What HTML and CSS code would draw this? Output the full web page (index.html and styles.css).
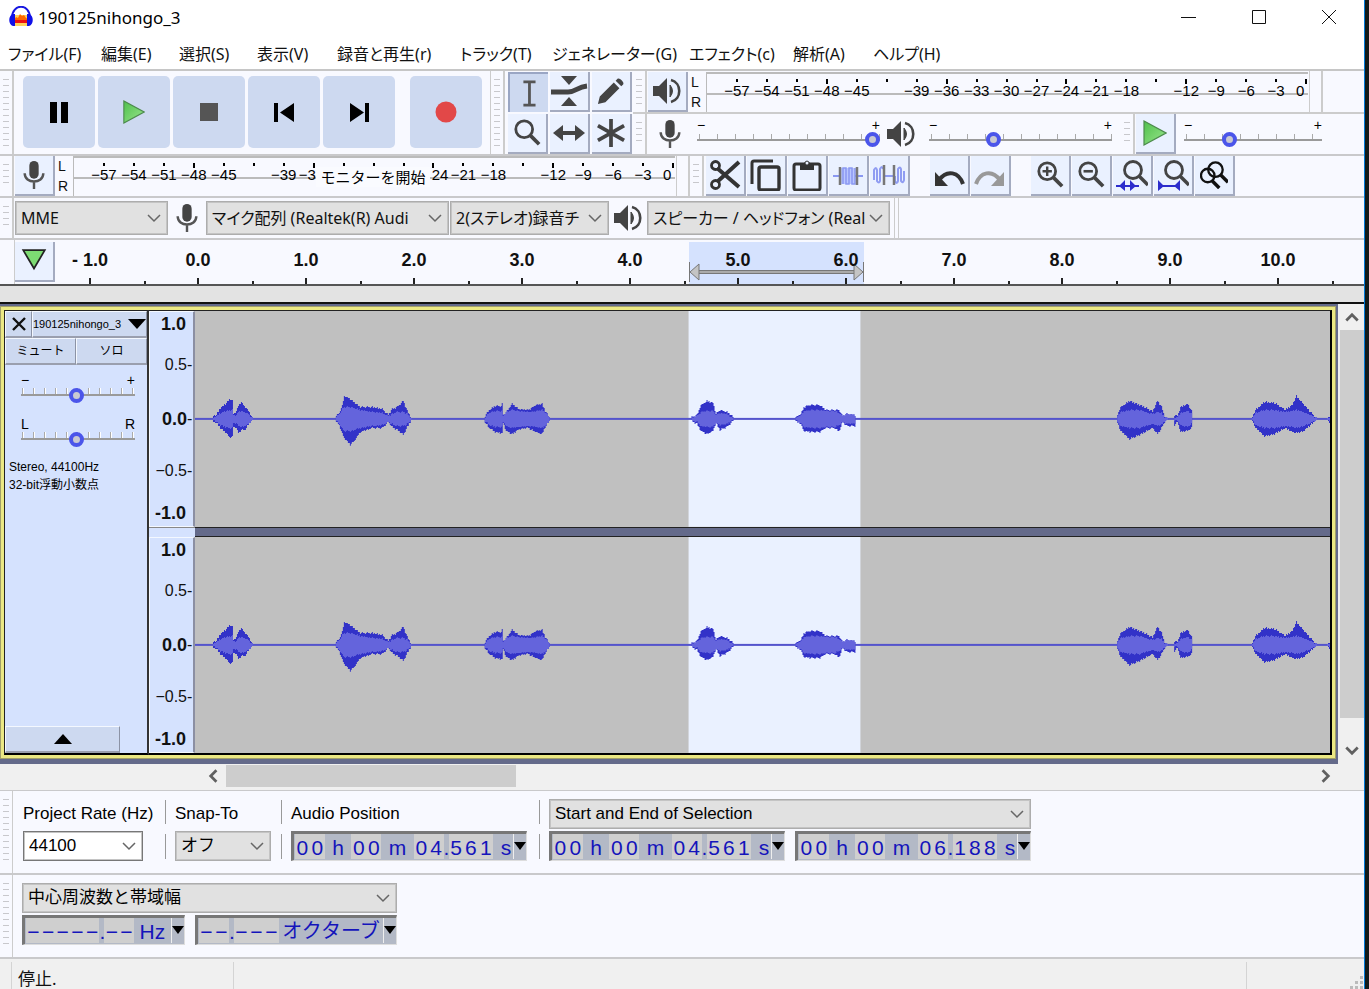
FILE: index.html
```html
<!DOCTYPE html>
<html lang="ja">
<head>
<meta charset="utf-8">
<title>190125nihongo_3</title>
<link rel="stylesheet" href="styles.css">
</head>
<body>
<svg class="defs" aria-hidden="true">
  <defs>
    <linearGradient id="green" x1="0" y1="0" x2="1" y2="1"><stop offset="0" stop-color="#4fc04c"/><stop offset="1" stop-color="#9be68e"/></linearGradient>
    <symbol id="chev" viewBox="0 0 14 14"><path d="M1 4l6 6 6-6" fill="none" stroke="#666" stroke-width="1.5"/></symbol>
    <symbol id="speaker" viewBox="0 0 28 28"><path d="M0 9h6l8-8v26l-8-8H0z" fill="#444"/><path d="M17 8q5 6 0 12z" fill="#444" stroke="#444"/><path d="M18 3c11 3 11 19 0 22" fill="none" stroke="#444" stroke-width="2.6"/></symbol>
    <symbol id="mic" viewBox="0 0 24 30"><rect x="7" y="0" width="10" height="19" rx="5" fill="#444"/><path d="M2 13c0 12 20 12 20 0M12 22v8" fill="none" stroke="#555" stroke-width="2.6"/></symbol>
    <symbol id="play" viewBox="0 0 24 26"><path d="M1 1v24l22-12z" fill="url(#green)" stroke="#4c8a4c" stroke-width="1.2"/></symbol>
    <symbol id="lens" viewBox="0 0 30 30"><circle cx="12" cy="11" r="9" fill="none" stroke="#444" stroke-width="3"/><path d="M18 17l10 10" stroke="#444" stroke-width="4"/></symbol>
  </defs>
</svg>
<div class="desktop">
<div class="window">
  <header class="titlebar">
    <svg class="logo" viewBox="0 0 24 22"><rect x="5" y="9" width="14" height="11" fill="#ffd35a"/><path d="M5 14l2-3 2 1 2-4 2 2 2-1 2 3 2 1v4H5z" fill="#f60"/><path d="M5 14h14v3H5z" fill="#e11"/><path d="M3 12C3-3 21-3 21 12" fill="none" stroke="#1717e0" stroke-width="2"/><path d="M4 8c-5 1-5 11 0 12h2V8zM20 8c5 1 5 11 0 12h-2V8z" fill="#1010e8"/></svg>
    <h1>190125nihongo_3</h1>
    <div class="winbtns">
      <button aria-label="最小化"><svg viewBox="0 0 16 16"><path d="M0 8.5h15"/></svg></button>
      <button aria-label="最大化"><svg viewBox="0 0 16 16"><path d="M1.500 1.500h13v13h-13z"/></svg></button>
      <button aria-label="閉じる"><svg viewBox="0 0 16 16"><path d="M1 1l14 14M15 1L1 15"/></svg></button>
    </div>
  </header>
  <nav class="menu">
    <button>ファイル(F)</button><button>編集(E)</button><button>選択(S)</button><button>表示(V)</button><button>録音と再生(r)</button><button>トラック(T)</button><button>ジェネレーター(G)</button><button>エフェクト(c)</button><button>解析(A)</button><button>ヘルプ(H)</button>
  </nav>

  <div class="row top">
    <section class="bar transport">
      <i class="grip"></i>
      <div class="big">
        <button aria-label="一時停止"><svg viewBox="0 0 24 24"><path d="M3 2h7v21H3zM14 2h7v21h-7z" fill="#000"/></svg></button>
        <button aria-label="再生"><svg viewBox="0 0 24 26"><use href="#play"/></svg></button>
        <button aria-label="停止"><svg viewBox="0 0 24 24"><path d="M3 3h18v18H3z" fill="#555"/></svg></button>
        <button aria-label="先頭へ"><svg viewBox="0 0 24 24"><path d="M2 3h4v19H2zM22 3v19L8 12.500z" fill="#000"/></svg></button>
        <button aria-label="末尾へ"><svg viewBox="0 0 24 24"><path d="M18 3h4v19h-4zM3 3v19l14-9.500z" fill="#000"/></svg></button>
        <button class="rec" aria-label="録音"><svg viewBox="0 0 24 24"><circle cx="12" cy="12" r="10.500" fill="#e24848"/></svg></button>
      </div>
    </section>
    <section class="bar">
      <i class="grip"></i>
      <div class="tools">
        <button class="tb on" aria-label="選択ツール"><svg viewBox="0 0 30 30"><path d="M9 3h13M9 28h13M15.500 3v25" fill="none" stroke="#555" stroke-width="3"/></svg></button>
        <button class="tb" aria-label="エンベロープツール"><svg class="wide" viewBox="0 0 38 32"><path d="M11 1h16l-8 9zM11 31h16l-8-9z" fill="#444"/><path d="M1 17h17c8 0 9-5 19-6" fill="none" stroke="#444" stroke-width="5"/></svg></button>
        <button class="tb" aria-label="描画ツール"><svg viewBox="0 0 30 30"><path d="M1 29l2-8L18 6l6 6L9 27zM20 4l2-2c2-2 8 4 6 6l-2 2z" fill="#444"/></svg></button>
        <button class="tb" aria-label="ズームツール"><svg viewBox="0 0 30 30"><use href="#lens"/></svg></button>
        <button class="tb" aria-label="タイムシフトツール"><svg class="wide" viewBox="0 0 38 32"><path d="M3 16l10-8v16zM35 16l-10-8v16z" fill="#444"/><path d="M10 16h18" stroke="#444" stroke-width="4"/></svg></button>
        <button class="tb" aria-label="マルチツール"><svg viewBox="0 0 30 30"><path d="M15 0v30M1 7l28 16M29 7L1 23" stroke="#444" stroke-width="4"/></svg></button>
      </div>
    </section>
    <div class="stack">
      <section class="bar">
        <i class="grip"></i>
        <button class="tb" aria-label="再生メーター"><svg viewBox="0 0 28 28"><use href="#speaker"/></svg></button>
        <div class="lr"><span>L</span><span>R</span></div>
        <ol class="meter">
          <li>−57</li><li>−54</li><li>−51</li><li>−48</li><li>−45</li><li></li><li>−39</li><li>−36</li><li>−33</li><li>−30</li><li>−27</li><li>−24</li><li>−21</li><li>−18</li><li></li><li>−12</li><li>−9</li><li>−6</li><li>−3</li><li>0</li>
        </ol>
        <i class="endcap"></i>
      </section>
      <section class="bar">
        <i class="grip"></i>
        <svg class="glyph first" viewBox="0 0 24 30"><use href="#mic"/></svg>
        <label class="slider"><span>−</span><span>+</span><input type="range" value="100" aria-label="録音音量"></label>
        <svg class="glyph" viewBox="0 0 28 28"><use href="#speaker"/></svg>
        <label class="slider"><span>−</span><span>+</span><input type="range" value="34" aria-label="再生音量"></label>
        <i class="grip"></i>
        <button class="tb" aria-label="指定速度で再生"><svg class="small" viewBox="0 0 24 26"><use href="#play"/></svg></button>
        <label class="slider short"><span>−</span><span>+</span><input type="range" value="31" aria-label="再生速度"></label>
      </section>
    </div>
  </div>

  <div class="row">
    <section class="bar">
      <i class="grip"></i>
      <button class="tb" aria-label="録音メーター"><svg viewBox="0 0 24 30"><use href="#mic"/></svg></button>
      <div class="lr"><span>L</span><span>R</span></div>
      <ol class="meter">
        <li>−57</li><li>−54</li><li>−51</li><li>−48</li><li>−45</li><li></li><li>−39</li><li class="start">−3</li><li></li><li></li><li></li><li class="end">24</li><li>−21</li><li>−18</li><li></li><li>−12</li><li>−9</li><li>−6</li><li>−3</li><li>0</li>
        <li class="tip">モニターを開始</li>
      </ol>
      <i class="endcap"></i>
    </section>
    <section class="bar">
      <i class="grip"></i>
      <div class="edit">
        <button class="tb" aria-label="切り取り"><svg viewBox="0 0 32 32"><path d="M8 9l22 19M8 23L30 3" stroke="#333" stroke-width="4"/><circle cx="6.500" cy="6.500" r="4" fill="none" stroke="#333" stroke-width="2.800"/><circle cx="6.500" cy="25.500" r="4" fill="none" stroke="#333" stroke-width="2.800"/></svg></button>
        <button class="tb" aria-label="コピー"><svg viewBox="0 0 32 32"><path d="M2 25V4q0-2 2-2h19" fill="none" stroke="#333" stroke-width="3"/><rect x="9" y="8" width="20" height="23" rx="2" fill="none" stroke="#333" stroke-width="3.400"/></svg></button>
        <button class="tb" aria-label="貼り付け"><svg viewBox="0 0 32 32"><rect x="3" y="5" width="26" height="26" rx="2" fill="none" stroke="#333" stroke-width="3"/><path d="M9 4h4q3-5 6 0h4v7H9z" fill="#333"/><circle cx="16" cy="4" r="1.500" fill="#eaf1ff"/></svg></button>
        <button class="tb" aria-label="トリム"><svg viewBox="0 0 32 32"><path d="M1 17h30" stroke="#8a98f2" stroke-width="2"/><path d="M9 9h14v16H9z" fill="#b9c6ff"/><path d="M11 25V9h3v16h3V9h3v16h3V9" fill="none" stroke="#8a98f2" stroke-width="1.500"/><path d="M8 8v18M25 8v18" stroke="#777" stroke-width="2.500"/></svg></button>
        <button class="tb" aria-label="無音化"><svg viewBox="0 0 32 32"><path d="M1 21V11q2-4 3 0v11q2 3 3 0V10q2-4 3 0M12 17h9M22 17v5q2 4 3 0V10q2-3 3 0v12q2 3 3-1V12" fill="none" stroke="#8f9cf2" stroke-width="2"/><path d="M11 6v20M21 6v20" stroke="#777" stroke-width="2.500"/></svg></button>
      </div>
      <div class="edit gapped">
        <button class="tb" aria-label="元に戻す"><svg viewBox="0 0 32 32"><path d="M2 13v14h13z" fill="#333"/><path d="M6 21C14 10 26 13 30 25" fill="none" stroke="#333" stroke-width="4"/></svg></button>
        <button class="tb" aria-label="やり直し"><svg viewBox="0 0 32 32"><path d="M30 13v14H17z" fill="#999"/><path d="M26 21C18 10 6 13 2 25" fill="none" stroke="#999" stroke-width="4"/></svg></button>
      </div>
      <div class="edit gapped">
        <button class="tb" aria-label="ズームイン"><svg class="fit" viewBox="0 0 30 30"><use href="#lens"/><path d="M12 6v10M7 11h10" stroke="#444" stroke-width="2.600"/></svg></button>
        <button class="tb" aria-label="ズームアウト"><svg class="fit" viewBox="0 0 30 30"><use href="#lens"/><path d="M7 11h10" stroke="#444" stroke-width="2.800"/></svg></button>
        <button class="tb" aria-label="選択範囲を合わせる"><svg viewBox="0 0 32 32"><circle cx="17" cy="11" r="8.500" fill="none" stroke="#444" stroke-width="2.800"/><path d="M23 17l9 9" stroke="#444" stroke-width="3.600"/><path d="M0 27h23" stroke="#2c2ccc" stroke-width="2"/><path d="M3 27l6-6v11zM20 27l-6-6v11z" fill="#2c2ccc"/></svg></button>
        <button class="tb" aria-label="全体を合わせる"><svg viewBox="0 0 32 32"><circle cx="17" cy="11" r="8.500" fill="none" stroke="#444" stroke-width="2.800"/><path d="M23 17l9 9" stroke="#444" stroke-width="3.600"/><path d="M1 27h22" stroke="#2c2ccc" stroke-width="2"/><path d="M1 21l6 6-6 5zM23 21l-6 6 6 5z" fill="#2c2ccc"/></svg></button>
        <button class="tb" aria-label="ズーム切り替え"><svg class="fit" viewBox="2 1 29 29"><g fill="none" stroke="#111"><circle cx="10" cy="16" r="7" stroke-width="2.400"/><circle cx="18" cy="10" r="7.500" stroke-width="2.400"/><path d="M14 21l8 8M23 15l8 8" stroke-width="3.600"/></g></svg></button>
      </div>
    </section>
  </div>

  <div class="row device">
    <i class="grip"></i>
    <div class="combo host"><select aria-label="オーディオホスト"><option>MME</option></select><svg><use href="#chev"/></svg></div>
    <svg class="glyph" viewBox="0 0 24 30"><use href="#mic"/></svg>
    <div class="combo mid"><select aria-label="録音デバイス"><option>マイク配列 (Realtek(R) Audi</option></select><svg><use href="#chev"/></svg></div>
    <div class="combo chan"><select aria-label="録音チャンネル"><option>2(ステレオ)録音チ</option></select><svg><use href="#chev"/></svg></div>
    <svg class="glyph" viewBox="0 0 28 28"><use href="#speaker"/></svg>
    <div class="combo mid"><select aria-label="再生デバイス"><option>スピーカー / ヘッドフォン (Real</option></select><svg><use href="#chev"/></svg></div>
    <i class="rules"></i>
  </div>

  <div class="timeline">
    <i class="blank"></i>
    <button class="tb" aria-label="再生ヘッドを固定"><svg viewBox="0 0 26 24"><path d="M3 2h20L13 19z" fill="#7ddb73" stroke="#222" stroke-width="1.600"/></svg></button>
    <div class="scale">
      <div class="range"><svg viewBox="0 0 175 24" preserveAspectRatio="none"><path d="M8 12h159" stroke="#777" stroke-width="4"/><path d="M8 12h159" stroke="#aaa" stroke-width="2"/><path d="M1 12l9-8v16zM174 12l-9-8v16z" fill="#c4c4c4" stroke="#777"/><path d="M.5 2v20M174.500 2v20" stroke="#777"/></svg></div>
      <ol><li>- 1.0</li><li>0.0</li><li>1.0</li><li>2.0</li><li>3.0</li><li>4.0</li><li>5.0</li><li>6.0</li><li>7.0</li><li>8.0</li><li>9.0</li><li>10.0</li><li></li></ol>
    </div>
  </div>
  <div class="scrub"></div>

  <main class="project">
    <div class="tracks">
      <article class="track">
        <div class="panel">
          <div class="head"><button class="pb" aria-label="閉じる"><svg viewBox="0 0 14 14"><path d="M1 1l12 12M13 1L1 13" stroke="#111" stroke-width="2.400"/></svg></button><button class="pb name">190125nihongo_3<svg viewBox="0 0 18 10"><path d="M0 0h18l-9 10z"/></svg></button></div>
          <div class="head halves"><button class="pb">ミュート</button><button class="pb">ソロ</button></div>
          <label class="slider mini"><span>−</span><span>+</span><input type="range" value="48" aria-label="ゲイン"></label>
          <label class="slider mini"><span>L</span><span>R</span><input type="range" value="48" aria-label="パン"></label>
          <p>Stereo, 44100Hz<br>32-bit浮動小数点</p>
          <button class="pb fold" aria-label="折りたたむ"><svg viewBox="0 0 18 10"><path d="M0 10h18L9 0z"/></svg></button>
        </div>
        <div class="channels">
          <ol class="vruler"><li><b>1.0</b></li><li>0.5<i>-</i></li><li><b>0.0</b><i>-</i></li><li>−0.5<i>-</i></li><li><b>-1.0</b></li></ol>
          <svg class="wave" viewBox="0 0 1136 216" preserveAspectRatio="none"></svg>
          <i class="seam light"></i><i class="seam"></i>
          <ol class="vruler"><li><b>1.0</b></li><li>0.5<i>-</i></li><li><b>0.0</b><i>-</i></li><li>−0.5<i>-</i></li><li><b>-1.0</b></li></ol>
          <svg class="wave" viewBox="0 0 1136 216" preserveAspectRatio="none"></svg>
        </div>
      </article>
    </div>
    <div class="vscroll">
      <button aria-label="上へ"><svg viewBox="0 0 14 14"><path d="M2 10l5-5 5 5"/></svg></button>
      <i></i>
      <button aria-label="下へ"><svg viewBox="0 0 14 14"><path d="M2 4l5 5 5-5"/></svg></button>
    </div>
  </main>
  <div class="hscroll">
    <button aria-label="左へ"><svg viewBox="0 0 14 14"><path d="M10 2L5 7l5 5"/></svg></button>
    <i></i>
    <button aria-label="右へ"><svg viewBox="0 0 14 14"><path d="M4 2l5 5-5 5"/></svg></button>
  </div>

  <section class="row bottom">
    <i class="grip"></i>
    <div class="field rate"><label for="rate">Project Rate (Hz)</label><div class="combo white"><select id="rate"><option>44100</option></select><svg><use href="#chev"/></svg></div></div>
    <i class="sep"></i>
    <div class="field snap"><label for="snap">Snap-To</label><div class="combo"><select id="snap"><option>オフ</option></select><svg><use href="#chev"/></svg></div></div>
    <i class="sep"></i>
    <div class="field pos"><span class="cap">Audio Position</span>
      <div class="time"><b>0</b><b>0</b><span class="h">h</span><b>0</b><b>0</b><span class="m">m</span><b>0</b><b>4</b><span class="dot">.</span><b>5</b><b>6</b><b>1</b><span class="s">s</span><button aria-label="形式"><svg viewBox="0 0 12 8"><path d="M0 0h12L6 8z"/></svg></button></div></div>
    <i class="sep"></i>
    <div class="field">
      <div class="combo sel"><select aria-label="選択モード"><option>Start and End of Selection</option></select><svg><use href="#chev"/></svg></div>
      <div class="pair">
      <div class="time"><b>0</b><b>0</b><span class="h">h</span><b>0</b><b>0</b><span class="m">m</span><b>0</b><b>4</b><span class="dot">.</span><b>5</b><b>6</b><b>1</b><span class="s">s</span><button aria-label="形式"><svg viewBox="0 0 12 8"><path d="M0 0h12L6 8z"/></svg></button></div>
      <div class="time"><b>0</b><b>0</b><span class="h">h</span><b>0</b><b>0</b><span class="m">m</span><b>0</b><b>6</b><span class="dot">.</span><b>1</b><b>8</b><b>8</b><span class="s">s</span><button aria-label="形式"><svg viewBox="0 0 12 8"><path d="M0 0h12L6 8z"/></svg></button></div>
      </div>
    </div>
  </section>
  <section class="row bottom">
    <i class="grip"></i>
    <div class="field spectral">
      <div class="combo"><select aria-label="周波数選択"><option>中心周波数と帯域幅</option></select><svg><use href="#chev"/></svg></div>
      <div class="pair">
      <div class="time"><b>−</b><b>−</b><b>−</b><b>−</b><b>−</b><span class="dot">.</span><b>−</b><b>−</b><span class="hz">Hz</span><button aria-label="形式"><svg viewBox="0 0 12 8"><path d="M0 0h12L6 8z"/></svg></button></div>
      <div class="time"><b>−</b><b>−</b><span class="dot">.</span><b>−</b><b>−</b><b>−</b><span class="oct">オクターブ</span><button aria-label="形式"><svg viewBox="0 0 12 8"><path d="M0 0h12L6 8z"/></svg></button></div>
      </div>
    </div>
  </section>
  <footer class="status"><span>停止.</span><span></span><span><svg viewBox="0 0 14 14"><path d="M10 0h3v3h-3zM5 5h3v3H5zM10 5h3v3h-3zM0 10h3v3H0zM5 10h3v3H5zM10 10h3v3h-3z" fill="#bbb"/></svg></span></footer>
</div>
</div>
<script src="wave.js"></script>
</body>
</html>
```
FILE: styles.css
```css
* { box-sizing: border-box; }
body { margin: 0; font-family: "Noto Sans", "Noto Sans CJK JP", sans-serif; font-size: 16px; color: #111; font-feature-settings: "palt"; }
button { border: 0; padding: 0; margin: 0; background: none; font: inherit; color: inherit; }
ol { list-style: none; margin: 0; padding: 0; }
i { font-style: normal; }
.defs { position: absolute; width: 0; height: 0; }
.desktop { min-height: 100vh; background: #121a1a; padding-right: 4px; display: flex; }
.window { flex: 1; min-width: 0; background: #f8f9ff; border-right: 1px solid #0078d7; display: flex; flex-direction: column; }

.titlebar { display: flex; align-items: center; height: 34px; background: #fff; padding-left: 9px; gap: 5px; }
.logo { width: 24px; height: 22px; }
h1 { font-size: 17px; font-weight: 400; margin: 0; flex: 1; color: #000; }
.winbtns { display: flex; }
.winbtns button { width: 70px; height: 32px; display: grid; place-items: center; }
.winbtns svg { width: 16px; height: 16px; fill: none; stroke: #111; stroke-width: 1; }
.menu { display: grid; grid-template-columns: 93px 78px 78px 80px 123px 92px 137px 104px 80px auto; background: #fff; height: 37px; padding-left: 8px; align-items: center; border-bottom: 2px solid #c6c6c6; }
.menu button { text-align: left; white-space: nowrap; line-height: 24px; padding-top: 4px; }

.row { display: flex; border-bottom: 2px solid #c9c9cb; }
.bar { display: flex; align-items: center; }
.grip { width: 14px; flex: none; align-self: stretch; border-right: 2px solid #ccc; background: repeating-linear-gradient(#c8c8cc 0 1px, transparent 1px 6px) content-box; padding: 8px 3px; }
.transport { border-right: 1px solid #ccc; }
.big { display: flex; gap: 3px; padding: 5px 8px 6px 9px; }
.big button { width: 72px; height: 72px; border-radius: 5px; background: #cdd9f0; display: grid; place-items: center; }
.big svg { width: 24px; height: 24px; }
.big .rec { margin-left: 12px; }
.tools { display: grid; grid-template-columns: repeat(3, 40px); gap: 2px; padding: 0 1px 0 3px; }
.tb { width: 40px; height: 40px; flex: none; background: #eaf1ff; border-right: 2px solid #a4abc0; border-bottom: 2px solid #a4abc0; display: grid; place-items: center; }
.tb.on { background: #cdd9f0; border: 0; border-left: 2px solid #9aa6c4; border-top: 2px solid #9aa6c4; }
.tb svg { width: 28px; height: 28px; }
.tb .wide { width: 38px; height: 32px; }
.tb .small { width: 24px; height: 26px; }
.stack { flex: 1; }
.stack .bar { height: 41px; }
.stack .bar + .bar { border-top: 2px solid #ccc; height: 42px; }
.stack .bar .tb { margin-left: 4px; }
.lr { display: flex; flex-direction: column; justify-content: space-between; width: 18px; padding-left: 3px; font: 14px/20px "Liberation Sans", sans-serif; }
.meter { position: relative; display: flex; width: 615px; height: 40px; padding-left: 15px; border-left: 1px solid #bbb; background: linear-gradient(#bbb, #bbb) 0 0 / 601px 2px no-repeat, linear-gradient(#bbb, #bbb) 0 21px / 601px 2px no-repeat; }
.meter li { flex: 1; text-align: center; font: 15px/20px "Liberation Sans", sans-serif; color: #000; background: linear-gradient(#000, #000) 50% 7px / 2px 3px no-repeat; padding-top: 9px; white-space: nowrap; }
.meter li:nth-child(4n) { background-size: 2px 5px; }
.meter li:nth-child(20) { text-indent: -12px; }
.meter .start { text-align: left; }
.meter .end { text-align: right; }
.meter .tip { position: absolute; left: 242px; top: 11px; width: 114px; height: 20px; padding: 0; background: #fafbff; font: 15px/20px "Noto Sans CJK JP", sans-serif; }
.endcap { width: 14px; align-self: stretch; border-right: 2px solid #ccc; margin-left: -12px; }
.endcap::before { content: ""; display: block; width: 1px; height: 100%; background: #ccc; }
.rules { width: 9px; align-self: stretch; border-right: 1px solid #ccc; background: linear-gradient(#ccc, #ccc) 4px 0 / 1px 100% no-repeat; }

.glyph { width: 28px; height: 28px; flex: none; margin: 0 5px; }
.glyph.first { margin-left: 9px; }
.slider { display: grid; grid-template-columns: 1fr 1fr; width: 183px; margin-left: 6px; font: 14px/14px "Liberation Sans", sans-serif; color: #000; }
.slider + .glyph { margin-left: 7px; }
.glyph + .slider { margin-left: 9px; }
.glyph.first + .slider { margin-left: 8px; }
.slider span + span { text-align: right; }
.slider input { grid-column: 1 / 3; appearance: none; margin: 0; width: 100%; height: 16px; background: linear-gradient(#9a9a9a, #9a9a9a) 0 7px / 100% 2px no-repeat, repeating-linear-gradient(90deg, #aaa 0 1px, transparent 1px 18px) 2px 2px / 100% 5px no-repeat; }
.slider input::-webkit-slider-thumb { appearance: none; width: 15px; height: 15px; border-radius: 50%; border: 4px solid #4b55ea; background: #c9c9d2; }
.slider.short { width: 138px; margin-left: 8px; }
.slider + .grip { margin-left: 9px; }
.stack .bar + .bar > .slider { margin-bottom: 3px; }

.edit { display: flex; gap: 1px; padding-left: 2px; }
.edit .tb svg { width: 32px; height: 32px; }
.edit .tb .fit { width: 28px; height: 28px; }
.edit.gapped { margin-left: 18px; }
.row .bar > .tb { margin-left: 1px; }

.device { height: 42px; align-items: center; }
.combo { display: grid; grid-template-columns: minmax(0, 1fr) 14px 6px; align-items: center; background: #e1e1e1; border: 1px solid #adadad; outline: 1px solid #c4c4c4; outline-offset: -2px; height: 34px; }
.combo select { grid-area: 1 / 1 / 2 / 4; appearance: none; border: 0; background: none; font: inherit; color: inherit; width: 100%; height: 100%; padding: 0 20px 0 5px; font-feature-settings: inherit; }
.combo svg { grid-area: 1 / 2; width: 14px; height: 14px; pointer-events: none; }
.combo.white { background: #fff; border-color: #777; }
.host { width: 153px; margin-left: 1px; }
.mid { width: 243px; }
.chan { width: 159px; margin-left: 1px; }
.device .glyph { margin: 0 5px; }

.timeline { display: flex; height: 44px; align-items: center; }
.blank { width: 15px; align-self: stretch; border-right: 1px solid #ccc; }
.scale { position: relative; flex: 1; height: 44px; overflow: hidden; }
.scale ol { display: flex; position: relative; margin-left: -19px; }
.scale li { flex: 0 0 108px; height: 44px; text-align: center; font: bold 18px/40px "Liberation Sans", sans-serif; background: linear-gradient(#222, #222) 50% 100% / 2px 6px no-repeat, linear-gradient(#222, #222) 0 100% / 2px 3px no-repeat; }
.scale li:last-child { background-size: 0 0, 2px 3px; }
.range { position: absolute; left: 634px; width: 175px; top: 2px; bottom: 0; background: #d5e2fe; display: flex; align-items: flex-end; }
.range svg { width: 100%; height: 24px; }
.scrub { height: 20px; background: #e3e3e3; border-top: 2px solid #555; border-bottom: 2px solid #111; }

.project { display: flex; flex: 1; min-height: 440px; }
.tracks { flex: 1; background: #646a8a; padding: 2px 2px 5px 0; display: flex; }
.track { flex: 1; display: flex; border: 4px solid #ebe883; outline: 1px solid #a19f6a; outline-offset: -1px; min-width: 0; }
.track > * { border-top: 1px solid #222; border-bottom: 2px solid #000; }
.panel { width: 145px; background: #d5e2fe; border-left: 1px solid #222; border-right: 2px solid #333; display: flex; flex-direction: column; font: 12px/18px "Liberation Sans", "Noto Sans CJK JP", sans-serif; color: #000; }
.head { display: flex; }
.pb { background: #cdd9f0; border: 1px solid #f4f8ff; border-right-color: #8c93a5; border-bottom: 2px solid #9a9fae; height: 27px; flex: 1; display: flex; align-items: center; justify-content: center; }
.head .pb:first-child { flex: 0 0 27px; }
.head.halves .pb:first-child { flex: 1; }
.name { font-size: 11px; gap: 7px; }
.name svg, .fold svg { width: 18px; height: 10px; }
.head .pb svg { flex: none; }
.head .pb:first-child svg { width: 14px; }
.panel .fold { flex: none; width: 115px; margin-top: auto; }
.slider.mini { width: 114px; margin: 8px 0 0 16px; }
.slider.mini + .slider.mini { margin-top: 14px; }
.mini input { background: linear-gradient(#9a9a9a, #9a9a9a) 0 7px / 100% 2px no-repeat, repeating-linear-gradient(90deg, #aaa 0 1px, #fff 1px 2px, transparent 2px 11px) 1px 1px / 100% 6px no-repeat; }
.panel p { margin: 11px 0 0 4px; }
.channels { flex: 1; display: grid; grid-template-columns: 46px minmax(0, 1fr); grid-template-rows: 1fr 10px 1fr; border-right: 2px solid #000; }
.vruler { display: grid; grid-template-rows: 24fr 60fr 48fr 58fr 26fr; align-items: center; background: #d5e2fe; border: 1px solid #f4f8ff; border-right: 2px solid #8b8fa3; font: 16px/20px "Liberation Sans", sans-serif; }
.vruler li { display: flex; justify-content: flex-end; padding-right: 7px; white-space: nowrap; }
.vruler b { font-size: 18px; }
.vruler i { width: 6px; margin-right: -7px; }
.wave { width: 100%; height: 100%; background: #c0c0c0; }
.seam { background: #646a8a; border-top: 1px solid #222; border-bottom: 1px solid #222; }
.seam.light { background: #d5e2fe; border-color: #888 #8b8fa3 #d5e2fe; }

.vscroll { width: 26px; background: #f0f0f0; display: flex; flex-direction: column; padding-left: 2px; }
.vscroll button { height: 26px; display: grid; place-items: center; }
.vscroll i { flex: 1; background: #cdcdcd; margin-bottom: 20px; }
.vscroll svg, .hscroll svg { width: 16px; height: 16px; fill: none; stroke: #606060; stroke-width: 2.4; }
.hscroll { display: flex; height: 27px; background: #f0f0f0; padding: 1px 25px 3px 200px; border-bottom: 1px solid #c9c9cb; }
.hscroll button { width: 26px; display: grid; place-items: center; }
.hscroll i { width: 290px; background: #cdcdcd; margin-right: auto; }

.bottom { height: 84px; font: 17px/28px "Liberation Sans", "Noto Sans CJK JP", sans-serif; color: #000; }
.bottom .grip { width: 13px; border-right-width: 1px; }
.bottom .field { display: flex; flex-direction: column; gap: 2px; padding-top: 8px; }
.bottom .combo { height: 30px; }
.field > label, .cap { height: 30px; line-height: 30px; white-space: nowrap; }
.rate { width: 133px; margin-left: 10px; }
.rate .combo { width: 120px; }
.snap { width: 96px; }
.snap .combo { width: 96px; }
.sep { width: 1px; margin: 9px 9px 14px; background: linear-gradient(#999 0 24px, transparent 24px 34px, #999 34px); }
.snap + .sep { margin-left: 10px; }
.pos { width: 237px; }
.pos + .sep { margin-left: 11px; }
.pair { display: flex; gap: 10px; }
.time { display: flex; width: 236px; height: 30px; background: #b3b9c6; border: 1px solid #ddd; border-top: 3px solid #777; border-left: 3px solid #777; font: 21px/27px "Liberation Sans", "Noto Sans CJK JP", sans-serif; color: #1414bb; padding: 0 0 1px 1px; }
.time b { width: 15px; background: #cfcfcf; font-weight: 400; text-align: center; }
.time span { text-align: center; }
.time .h { width: 27px; }
.time .m { width: 33px; }
.time .dot { width: 5px; }
.time .s { width: 20px; padding-left: 6px; }
.time .hz { width: 38px; }
.time .oct { flex: 1; font-size: 20px; white-space: nowrap; }
.time button { width: 13px; margin-left: auto; border-left: 1px solid #eee; display: grid; place-items: center; }
.time svg { width: 12px; height: 8px; }
.spectral { width: 375px; margin-left: 9px; }
.spectral .time { width: 163px; }
.spectral .time + .time { width: 202px; }

.status { display: flex; height: 31px; background: #f0f0f0; font-size: 17px; line-height: 34px; padding-left: 11px; }
.status span { border-left: 1px solid #d4d4d4; margin-top: 3px; height: 28px; width: 222px; padding-left: 6px; }
.status span + span { flex: 1; }
.status span:last-child { flex: 0 0 118px; display: flex; justify-content: flex-end; align-items: flex-end; }
.status svg { width: 14px; height: 14px; }
```
FILE: wave.js
```js
// Each burst is a list of [x, peak above, peak below, rms] key points.
const bursts = [
  [[18,3,3,1],[21,4,4,3],[25,11,9,6],[30,15,13,8],[34,20,18,9],[37,18,18,9],[38,5,8,4],[41,8,9,4],[43,13,14,7],[46,17,11,8],[49,13,11,7],[53,8,6,5],[57,1,1,1]],
  [[141,3,3,2],[144,6,6,5],[147,13,15,10],[149,23,19,12],[155,20,26,12],[159,17,22,11],[165,12,13,9],[177,12,9,7],[187,10,9,6],[193,4,3,3],[197,10,8,5],[202,12,11,7],[208,18,16,7],[212,8,8,5],[216,1,1,1]],
  [[290,3,3,2],[294,9,9,6],[300,13,13,8],[306,13,14,8],[307,15,15,8],[308,4,4,3],[311,7,12,7],[317,15,15,9],[324,10,10,8],[333,9,9,7],[341,14,13,8],[347,15,15,9],[350,8,8,7],[354,2,2,2]],
  [[497,2,2,1],[502,4,5,3],[506,14,12,7],[512,18,15,8],[518,16,12,8],[521,5,4,4],[525,9,11,6],[532,7,8,5],[538,2,2,1]],
  [[601,2,2,1],[606,5,5,4],[609,12,12,8],[617,14,13,9],[625,14,13,9],[631,9,9,8],[640,9,9,8],[644,9,12,6],[648,3,3,3],[652,5,7,5],[660,4,7,4]],
  [[923,4,4,3],[926,12,12,7],[935,18,20,9],[945,14,16,9],[954,10,11,6],[958,7,9,5],[963,18,15,7],[967,12,9,6],[970,3,3,2],[973,1,1,1]],
  [[980,4,6,1],[983,3,3,2],[986,12,13,6],[993,15,12,8],[997,8,9,5]],
  [[1058,2,2,1],[1061,9,9,6],[1070,17,17,9],[1080,16,15,9],[1091,9,9,7],[1098,14,13,8],[1102,23,14,9],[1109,15,12,7],[1116,7,6,4],[1122,1,1,1]],
  [[1133,1,1,1],[1136,4,4,1]]
];

function mix(points, x, column) {
  let n = 1;
  while (points[n][0] < x) n++;
  const a = points[n - 1], b = points[n];
  return a[column] + (b[column] - a[column]) * (x - a[0]) / (b[0] - a[0]);
}

function outline(points, up, down, rough) {
  const top = [], bottom = [];
  const end = points[points.length - 1][0];
  for (let x = points[0][0]; x <= end; x++) {
    const wobble = ((x * 7) % 5 - 2) * rough;
    const high = Math.round(Math.max(1, mix(points, x, up) + wobble));
    const low = Math.round(Math.max(1, mix(points, x, down) - wobble));
    top.push(`${x},${108 - high} ${x + 1},${108 - high}`);
    bottom.unshift(`${x + 1},${108 + low} ${x},${108 + low}`);
  }
  return top.concat(bottom).join(" ");
}

let art = '<rect x="494" width="172" height="216" fill="#eaf1ff"/><rect y="107" width="1136" height="2" fill="#5454cc"/>';
for (const points of bursts) {
  art += `<polygon fill="#3232c8" points="${outline(points, 1, 2, 0.4)}"/>`;
  art += `<polygon fill="#6464dc" points="${outline(points, 3, 3, 0.3)}"/>`;
}
document.querySelectorAll(".wave").forEach(svg => { svg.innerHTML = art; });
```
